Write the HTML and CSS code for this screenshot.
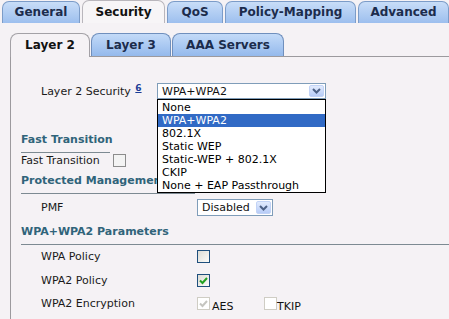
FILE: index.html
```html
<!DOCTYPE html>
<html lang="en">
<head>
    <meta charset="UTF-8">
    <title>WLAN Security</title>
    <link rel="stylesheet" href="styles.css">
</head>
<body>
    <div class="tabs">
        <div class="tab tab-general">General</div>
        <div class="tab tab-security active">Security</div>
        <div class="tab tab-qos">QoS</div>
        <div class="tab tab-policy">Policy-Mapping</div>
        <div class="tab tab-advanced">Advanced</div>
    </div>

    <div class="subtabs">
        <div class="subtab subtab-l2 active">Layer 2</div>
        <div class="subtab subtab-l3">Layer 3</div>
        <div class="subtab subtab-aaa">AAA Servers</div>
    </div>

    <div class="panel">
        <div class="row row-l2">
            <span class="label label-l2">Layer 2 Security <a class="note">6</a></span>
            <div class="combo">
                <div class="select select-wide">
                    <span class="select-text">WPA+WPA2</span>
                    <span class="arrow"><svg width="9" height="6" viewBox="0 0 9 6"><polyline points="1,1 4.5,4.5 8,1" fill="none" stroke="#4d6185" stroke-width="2"/></svg></span>
                </div>
                <ul class="dropdown">
                    <li>None</li>
                    <li class="selected">WPA+WPA2</li>
                    <li>802.1X</li>
                    <li>Static WEP</li>
                    <li>Static-WEP + 802.1X</li>
                    <li>CKIP</li>
                    <li>None + EAP Passthrough</li>
                </ul>
            </div>
        </div>

        <div class="section section-ft">Fast Transition</div>
        <div class="rule rule-ft"></div>
        <div class="row row-ft">
            <span class="label label-ft">Fast Transition</span>
            <span class="check check-grey"></span>
        </div>

        <div class="section section-pmf">Protected Management Frame</div>
        <div class="rule rule-pmf"></div>
        <div class="row row-pmf">
            <span class="label label-indent">PMF</span>
            <div class="select select-pmf">
                <span class="select-text">Disabled</span>
                <span class="arrow"><svg width="9" height="6" viewBox="0 0 9 6"><polyline points="1,1 4.5,4.5 8,1" fill="none" stroke="#4d6185" stroke-width="2"/></svg></span>
            </div>
        </div>

        <div class="section section-wpa">WPA+WPA2 Parameters</div>
        <div class="rule"></div>
        <div class="row row-param row-first">
            <span class="label label-indent">WPA Policy</span>
            <span class="check"></span>
        </div>
        <div class="row row-param row-second">
            <span class="label label-indent">WPA2 Policy</span>
            <span class="check"><svg width="11" height="11" viewBox="0 0 11 11"><polyline points="2,5.5 4.5,8 9,3" fill="none" stroke="#21a121" stroke-width="2"/></svg></span>
        </div>
        <div class="row row-param">
            <span class="label label-indent">WPA2 Encryption</span>
            <span class="check check-disabled"><svg width="11" height="11" viewBox="0 0 11 11"><polyline points="2,5.5 4.5,8 9,3" fill="none" stroke="#c5c5c0" stroke-width="2"/></svg></span>
            <span class="opt opt-aes">AES</span>
            <span class="check check-disabled"></span>
            <span class="opt">TKIP</span>
        </div>
    </div>
</body>
</html>
```

FILE: styles.css
```css
body {
    margin: 0;
    background-color: #f5f2f5;
    font-family: "DejaVu Sans", Verdana, sans-serif;
    font-size: 11px;
    color: #1a1a1a;
    overflow: hidden;
}

/* 顶部标签 */
.tabs {
    display: flex;
    gap: 2px;
    padding: 1px 0 0 2px;
    height: 22px;
}

.tab {
    box-sizing: border-box;
    height: 22px;
    border: 1px solid #7c9cc8;
    border-bottom: none;
    border-radius: 7px 7px 0 0;
    background: linear-gradient(#c8ddf8, #9dbfee);
    font-weight: bold;
    font-size: 12px;
    line-height: 21px;
    text-align: center;
    color: #1c2c4c;
}

.tab.active {
    background: #f7f5f7;
    border-color: #b9b6bc;
    color: #111;
    height: 23px;
    margin-top: -1px;
    line-height: 23px;
}

.tab-general { width: 78px; }
.tab-security { width: 83px; }
.tab-qos { width: 56px; }
.tab-policy { width: 131px; }
.tab-advanced { width: 91px; }

/* 二级标签 */
.subtabs {
    display: flex;
    gap: 1px;
    margin: 10px 0 0 10px;
    height: 23px;
    border-bottom: 1px solid #9c9a9e;
}

.subtab {
    box-sizing: border-box;
    height: 23px;
    border: 1px solid #6f8fbd;
    border-bottom: none;
    border-radius: 8px 8px 0 0;
    background: linear-gradient(#c3daf8, #94b9ec);
    font-weight: bold;
    font-size: 12px;
    line-height: 22px;
    text-align: center;
    color: #1c2c4c;
}

.subtab.active {
    background: #f5f2f5;
    border-color: #a3a1a6;
    color: #111;
    height: 24px;
    margin-bottom: -1px;
}

.subtab-l2 { width: 80px; }
.subtab-l3 { width: 80px; }
.subtab-aaa { width: 112px; }

/* 内容区 */
.panel {
    margin-left: 10px;
    border-left: 1px solid #9c9a9e;
    padding: 26px 0 20px 10px;
}

.row {
    display: flex;
    align-items: center;
}

.label-indent {
    width: 156px;
    padding-left: 20px;
}

.label-l2 {
    width: 116px;
    padding-left: 20px;
}

.label-ft {
    width: 92px;
}

.note {
    color: #1b3d96;
    text-decoration: underline;
    font-weight: bold;
    font-size: 9px;
    position: relative;
    top: -4px;
    margin-left: 1px;
}

.row-l2 {
    height: 16px;
}

.combo {
    position: relative;
}

.select {
    box-sizing: border-box;
    display: flex;
    align-items: center;
    justify-content: space-between;
    background: #fff;
    border: 1px solid #7f9db9;
    padding: 0 1px 0 4px;
    color: #111;
}

.select-wide {
    width: 169px;
    height: 16px;
}

.select-pmf {
    width: 76px;
    height: 17px;
}

.arrow {
    display: flex;
    align-items: center;
    justify-content: center;
    width: 15px;
    height: 12px;
    border-radius: 2px;
    background: linear-gradient(#e2ebfd, #b7ccf7);
    border: 1px solid #c2d3f6;
    box-sizing: border-box;
}

.select-pmf .arrow {
    height: 13px;
}

/* 展开的下拉列表 */
.dropdown {
    position: absolute;
    top: 16px;
    left: 0;
    box-sizing: border-box;
    width: 169px;
    margin: 0;
    padding: 1px 0 0;
    list-style: none;
    background: #fff;
    border: 1px solid #000;
    z-index: 5;
}

.dropdown li {
    height: 13px;
    line-height: 13px;
    padding-left: 4px;
    color: #000;
}

.dropdown li.selected {
    background: #316ac5;
    color: #fff;
}

/* 分组标题 */
.section {
    font-weight: bold;
    font-size: 11px;
    line-height: 14px;
    color: #30647a;
    white-space: nowrap;
    padding-bottom: 5px;
}

.section-ft { margin-top: 34px; }
.section-pmf { margin-top: 7px; }
.section-wpa { margin-top: 9px; }

.rule {
    height: 1px;
    background: #7d8a92;
}

.rule-ft { width: 89px; }
.rule-pmf { width: 174px; }

.row-ft {
    height: 13px;
    margin-top: 1px;
}

.row-pmf {
    height: 17px;
    margin-top: 5px;
}

.row-param {
    height: 13px;
    margin-top: 10px;
}

.row-param.row-first {
    margin-top: 5px;
}

.row-param.row-second {
    margin-top: 11px;
}

.check {
    box-sizing: border-box;
    display: flex;
    align-items: center;
    justify-content: center;
    width: 13px;
    height: 13px;
    border: 1px solid #1e4f7d;
    background: linear-gradient(135deg, #dcdcd5, #fbfbf9);
}

.check-grey {
    border-color: #8c8c8c;
    background: #f3f3f3;
}

.check-disabled {
    border-color: #cfcdc4;
    background: #fff;
}

.opt {
    color: #111;
    line-height: 13px;
    position: relative;
    top: 3px;
}

.opt-aes {
    width: 52px;
    margin-left: 2px;
}
```
